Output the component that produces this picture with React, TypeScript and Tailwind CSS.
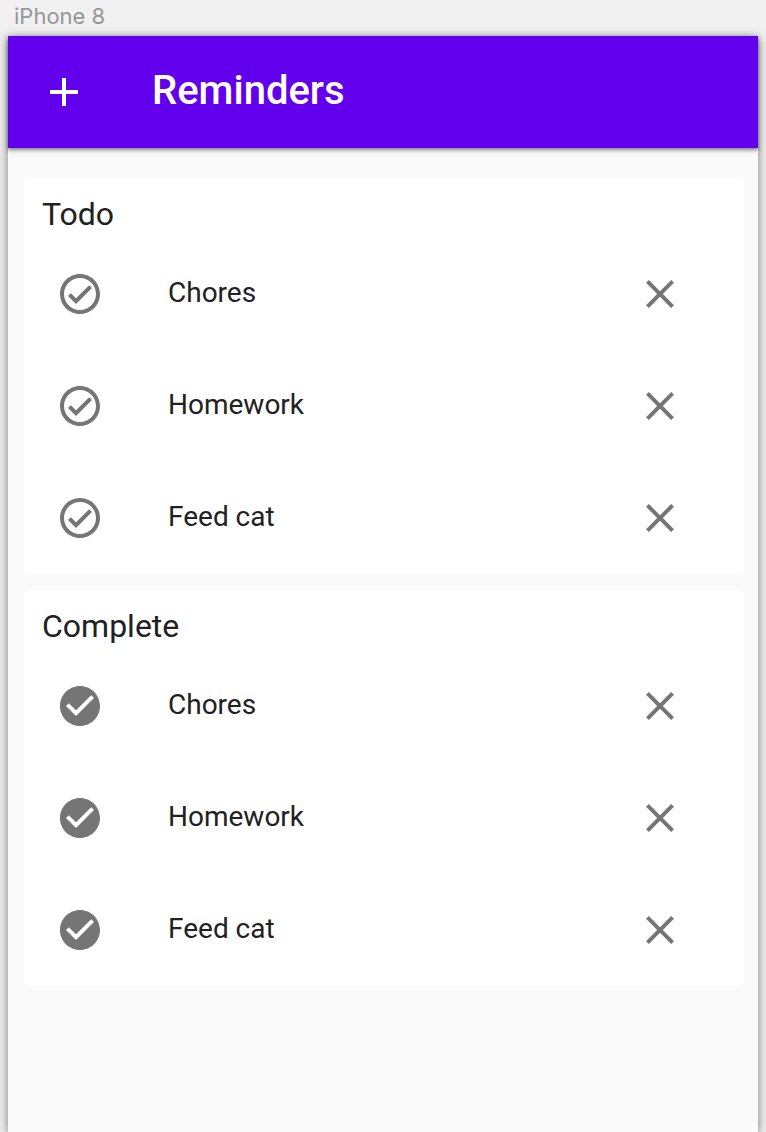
import { useState } from 'react'
import { MdAdd, MdClose } from 'react-icons/md'

interface Reminder {
  id: number
  label: string
}

const initialTodo: Reminder[] = [
  { id: 1, label: 'Chores' },
  { id: 2, label: 'Homework' },
  { id: 3, label: 'Feed cat' },
]

const initialComplete: Reminder[] = [
  { id: 4, label: 'Chores' },
  { id: 5, label: 'Homework' },
  { id: 6, label: 'Feed cat' },
]

const RING =
  'M12 2C6.48 2 2 6.48 2 12s4.48 10 10 10 10-4.48 10-10S17.52 2 12 2zm0 18c-4.41 0-8-3.59-8-8s3.59-8 8-8 8 3.59 8 8-3.59 8-8 8zm4.59-12.42L10 14.17l-2.59-2.58L6 13l4 4 8-8z'
const DISC =
  'M12 2C6.48 2 2 6.48 2 12s4.48 10 10 10 10-4.48 10-10S17.52 2 12 2zm-2 15l-5-5 1.41-1.41L10 14.17l7.59-7.59L19 8l-9 9z'

function CheckIcon({ filled }: { filled: boolean }) {
  return (
    <svg viewBox="0 0 24 24" fill="currentColor" className="size-12" aria-hidden="true">
      <path d={filled ? DISC : RING} />
    </svg>
  )
}

interface ReminderCardProps {
  title: string
  items: Reminder[]
  done: boolean
  onToggle: (item: Reminder) => void
  onRemove: (item: Reminder) => void
}

function ReminderCard({ title, items, done, onToggle, onRemove }: ReminderCardProps) {
  return (
    <section className="rounded-md bg-white">
      <h2 className="px-[18px] pt-4 pb-1 text-[32px] leading-10 text-[#212121]">{title}</h2>
      <ul>
        {items.map((item) => (
          <li key={item.id} className="flex h-28 items-center gap-16 pr-[60px] pl-8">
            <button
              type="button"
              aria-label={done ? `Reopen ${item.label}` : `Complete ${item.label}`}
              className="text-[#757575]"
              onClick={() => onToggle(item)}
            >
              <CheckIcon filled={done} />
            </button>
            <span className="flex-1 pb-0.5 text-[28px] leading-10 text-[#212121]">{item.label}</span>
            <button
              type="button"
              aria-label={`Remove ${item.label}`}
              className="text-[#757575]"
              onClick={() => onRemove(item)}
            >
              <MdClose className="size-12" />
            </button>
          </li>
        ))}
      </ul>
    </section>
  )
}

export default function App() {
  const [todo, setTodo] = useState(initialTodo)
  const [complete, setComplete] = useState(initialComplete)

  const without = (items: Reminder[], item: Reminder) => items.filter((i) => i.id !== item.id)

  const addReminder = () => setTodo([...todo, { id: Date.now(), label: 'New reminder' }])

  const finish = (item: Reminder) => {
    setTodo(without(todo, item))
    setComplete([...complete, item])
  }

  const reopen = (item: Reminder) => {
    setComplete(without(complete, item))
    setTodo([...todo, item])
  }

  return (
    <div className="flex min-h-screen flex-col bg-[#f1f1f1] px-2 font-[Roboto,sans-serif]">
      <p className="h-9 px-1.5 pt-1 font-[Inter,sans-serif] text-[22px] leading-6 text-[#979797]">iPhone 8</p>
      <div className="flex flex-1 flex-col bg-[#fafafa] shadow-[0_2px_10px_rgba(0,0,0,0.5)]">
        <header className="flex h-28 items-center gap-16 bg-[#6200ee] px-8 text-white shadow-[0_2px_4px_rgba(0,0,0,0.5)]">
          <button type="button" aria-label="Add reminder" onClick={addReminder}>
            <MdAdd className="size-12" />
          </button>
          <h1 className="pb-0.5 text-[40px] leading-12 font-medium">Reminders</h1>
        </header>
        <main className="flex flex-col gap-4 pt-[30px] pr-3.5 pb-4 pl-4">
          <ReminderCard
            title="Todo"
            items={todo}
            done={false}
            onToggle={finish}
            onRemove={(item) => setTodo(without(todo, item))}
          />
          <ReminderCard
            title="Complete"
            items={complete}
            done
            onToggle={reopen}
            onRemove={(item) => setComplete(without(complete, item))}
          />
        </main>
      </div>
    </div>
  )
}
